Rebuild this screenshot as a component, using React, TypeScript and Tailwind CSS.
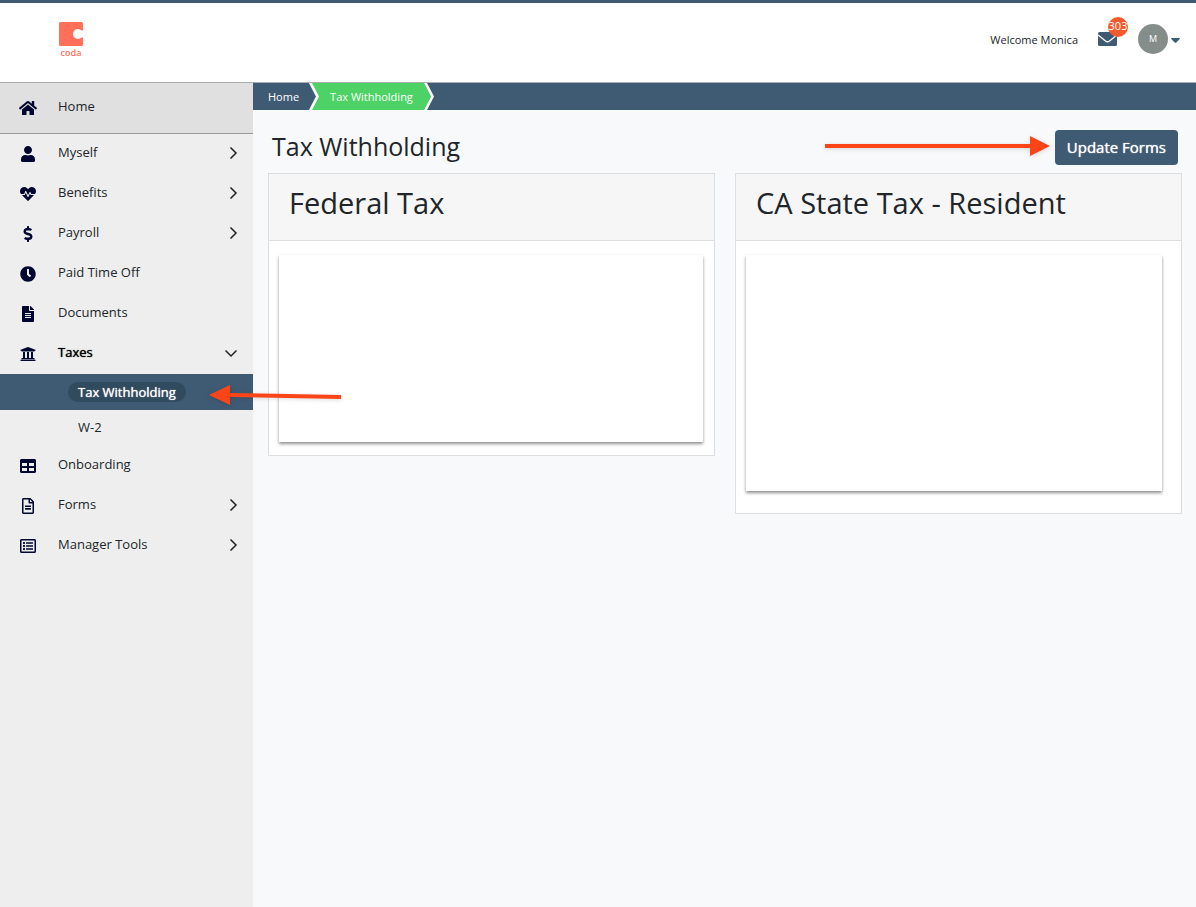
import type { ReactNode } from "react";
import type { IconType } from "react-icons";
import {
  FaClock,
  FaDollarSign,
  FaFileAlt,
  FaHeartbeat,
  FaHome,
  FaRegFileAlt,
  FaRegListAlt,
  FaTable,
  FaUniversity,
  FaUser,
} from "react-icons/fa";

type NavItem = {
  label: string;
  icon: IconType;
  expandable?: boolean;
  children?: string[];
};

const navItems: NavItem[] = [
  { label: "Myself", icon: FaUser, expandable: true },
  { label: "Benefits", icon: FaHeartbeat, expandable: true },
  { label: "Payroll", icon: FaDollarSign, expandable: true },
  { label: "Paid Time Off", icon: FaClock },
  { label: "Documents", icon: FaFileAlt },
  { label: "Taxes", icon: FaUniversity, expandable: true, children: ["Tax Withholding", "W-2"] },
  { label: "Onboarding", icon: FaTable },
  { label: "Forms", icon: FaRegFileAlt, expandable: true },
  { label: "Manager Tools", icon: FaRegListAlt, expandable: true },
];

function Logo() {
  return (
    <a href="#" aria-label="coda" className="flex flex-col items-center pb-1 text-[#ff6f59]">
      <svg viewBox="0 0 24 24" className="size-6" fill="currentColor" aria-hidden="true">
        <path d="M1.500 0h21A1.500 1.500 0 0 1 24 1.500V8.500h-1.200c-.9 0-1.600-1.500-3.900-1.500A4.900 4.900 0 0 0 14 12a4.900 4.900 0 0 0 4.900 5c2.300 0 3-1.500 3.900-1.500H24v7a1.500 1.500 0 0 1-1.500 1.500h-21A1.500 1.500 0 0 1 0 22.500v-21A1.500 1.500 0 0 1 1.500 0Z" />
      </svg>
      <span className="text-[9px] leading-[14px] font-semibold">coda</span>
    </a>
  );
}

function Chevron({ down = false }: { down?: boolean }) {
  return (
    <svg
      viewBox="0 0 14 14"
      className={down ? "mr-[2px] mb-[2px] size-[14px]" : "mb-[2px] size-[14px]"}
      fill="none"
      stroke="#222"
      strokeWidth="1.500"
      aria-hidden="true"
    >
      {down ? <path d="M1.500 4.500 7 10l5.500-5.500" /> : <path d="M4.500 1.500 10 7l-5.500 5.500" />}
    </svg>
  );
}

function Sidebar() {
  return (
    <nav className="w-[253px] shrink-0 bg-[#eeeeee]" aria-label="Main">
      <a href="#" className="flex h-[51px] items-center border-b border-[#999] bg-[#e0e0e0] pl-[19px]">
        <FaHome className="size-[18px]" color="#00062f" aria-hidden="true" />
        <span className="pb-[2px] pl-[21px]">Home</span>
      </a>
      <ul>
        {navItems.map(({ label, icon: Icon, expandable, children }) => (
          <li key={label}>
            <a href="#" className="flex h-10 items-center pr-[13px] pl-5">
              <Icon className="size-4" color="#00062f" aria-hidden="true" />
              <span
                className={
                  children
                    ? "flex-1 pb-[2px] pl-[22px] text-black [text-shadow:0_0_1px_currentColor]"
                    : "flex-1 pb-[2px] pl-[22px]"
                }
              >
                {label}
              </span>
              {expandable && <Chevron down={Boolean(children)} />}
            </a>
            {children && (
              <ul>
                {children.map((child, index) => (
                  <li key={child} className="relative">
                    {index === 0 ? (
                      <>
                        <a
                          href="#"
                          aria-current="page"
                          className="flex h-9 items-center bg-[#3f5b73] pl-[68px] text-white [text-shadow:0_0_1px_currentColor]"
                        >
                          <span className="rounded-full bg-[#304a5e] px-[10px] leading-5">{child}</span>
                        </a>
                        <svg
                          viewBox="0 0 136 26"
                          className="absolute top-2 left-[209px] z-10 h-[26px] w-[136px] drop-shadow-sm"
                          aria-hidden="true"
                        >
                          <path d="M0 13 21 3v8l111 2v4L21 15v8Z" fill="#fc4419" />
                        </svg>
                      </>
                    ) : (
                      <a href="#" className="flex h-9 items-center pl-[78px]">
                        {child}
                      </a>
                    )}
                  </li>
                ))}
              </ul>
            )}
          </li>
        ))}
      </ul>
    </nav>
  );
}

function Breadcrumb() {
  return (
    <nav aria-label="Breadcrumb" className="bg-[#3f5b73]">
      <ol className="flex h-[27px] items-stretch text-[11px] leading-[28px] text-white">
        <li className="pl-[15px]">
          <a href="#">Home</a>
        </li>
        <li className="ml-[10px] flex bg-[#4cd265]">
          <svg viewBox="0 0 10 27" className="h-[27px] w-[10px]" aria-hidden="true">
            <path d="M0 0l7 13.500L0 27Z" fill="#3f5b73" />
            <path d="M0 0h3l7 13.500L3 27H0l7-13.500Z" fill="white" />
          </svg>
          <span className="px-[11px]">Tax Withholding</span>
        </li>
        <li aria-hidden="true">
          <svg viewBox="0 0 10 27" className="h-[27px] w-[10px]">
            <path d="M0 0l7 13.500L0 27Z" fill="#4cd265" />
            <path d="M0 0h3l7 13.500L3 27H0l7-13.500Z" fill="white" />
          </svg>
        </li>
      </ol>
    </nav>
  );
}

function TaxCard({ title, children }: { title: string; children: ReactNode }) {
  return (
    <section className="min-w-0 flex-1 border border-[#dcdee1] bg-white">
      <h2 className="border-b border-[#dcdee1] bg-[#f6f6f7] px-5 pt-[9px] pb-[17px] text-[29px] leading-10">{title}</h2>
      {children}
    </section>
  );
}

export default function App() {
  return (
    <div className="flex min-h-screen flex-col bg-[#f8f9fb] font-['Open_Sans',sans-serif] text-[13px] text-[#212529]">
      <header className="flex h-[83px] items-center justify-between border-t-3 border-b border-t-[#3f5b73] border-b-[#a9adb0] bg-white pr-4 pl-[59px]">
        <Logo />
        <div className="flex items-center pb-2">
          <span className="pt-[3px] text-[11px]">Welcome Monica</span>
          <button type="button" aria-label="303 messages" className="relative ml-5 text-[#3f5b73]">
            <svg viewBox="0 0 19 14" className="h-[14px] w-[19px]" aria-hidden="true">
              <rect width="19" height="14" rx="1.500" fill="currentColor" />
              <path d="M0 3 7.500 9q2 1.500 4 0L19 3" fill="none" stroke="white" strokeWidth="1.300" />
            </svg>
            <span className="absolute -top-[15px] left-[10px] flex size-5 items-center justify-center rounded-full bg-[#f45b2c] text-[11px] text-white">
              303
            </span>
          </button>
          <button type="button" aria-label="Account menu" className="ml-[21px] flex items-center gap-[3px] text-[#3f5b73]">
            <span className="flex size-[30px] items-center justify-center rounded-full bg-[#858d8a] text-[9px] text-white">M</span>
            <svg viewBox="0 0 9 5" className="mt-1 h-[5px] w-[9px]" aria-hidden="true">
              <path d="M.7 0h7.600q1 .3.400 1L5.300 4.500q-.8.700-1.600 0L.3 1Q-.3.300.7 0Z" fill="currentColor" />
            </svg>
          </button>
        </div>
      </header>
      <div className="flex flex-1">
        <Sidebar />
        <main className="min-w-0 flex-1">
          <Breadcrumb />
          <div className="flex items-center pt-5 pr-[18px] pl-[19px]">
            <h1 className="flex-1 pb-1 text-[25px] leading-[30px]">Tax Withholding</h1>
            <svg viewBox="0 0 226 26" className="mr-1 mb-[3px] h-[26px] w-[226px] drop-shadow-sm" aria-hidden="true">
              <path d="M0 11h205V3l20 10-20 10v-8H0Z" fill="#fc4419" />
            </svg>
            <button
              type="button"
              className="h-[35px] rounded-[4px] bg-[#3f5b73] px-3 text-[15px] text-white [text-shadow:0_0_1px_currentColor]"
            >
              Update Forms
            </button>
          </div>
          <div className="flex items-start gap-5 pt-2 pr-[14px] pl-[15px]">
            <TaxCard title="Federal Tax">
              <div className="pt-[14px] pr-[11px] pb-[13px] pl-[10px]">
                <div className="h-[187px] bg-white shadow-[0_2px_3px_#00000070]" />
              </div>
            </TaxCard>
            <TaxCard title="CA State Tax - Resident">
              <div className="pt-[14px] pr-[19px] pb-[22px] pl-[10px]">
                <div className="h-[236px] bg-white shadow-[0_2px_3px_#00000070]" />
              </div>
            </TaxCard>
          </div>
        </main>
      </div>
    </div>
  );
}
